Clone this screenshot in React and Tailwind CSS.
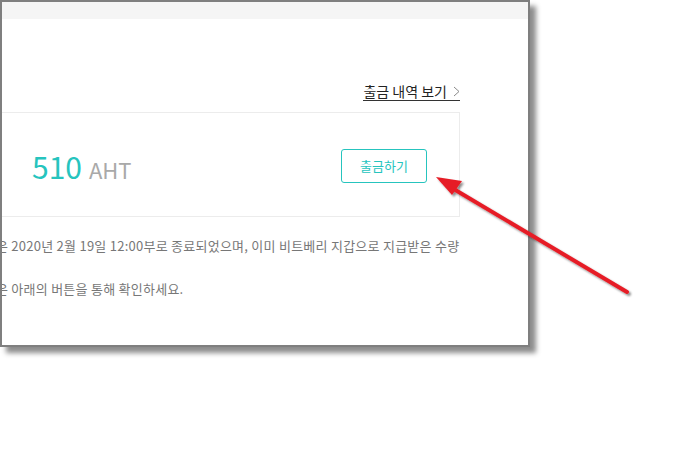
const font = { fontFamily: '"Noto Sans CJK KR", "Noto Sans", sans-serif' };

const Arrow = () => (
  <svg className="absolute left-0 top-0 pointer-events-none" width="680" height="453" viewBox="0 0 680 453">
    <defs>
      <filter id="sh" x="-20%" y="-20%" width="140%" height="140%">
        <feDropShadow dx="2" dy="2" stdDeviation="1.2" floodColor="#000" floodOpacity="0.45" />
      </filter>
    </defs>
    <g filter="url(#sh)">
      <line x1="627" y1="292" x2="452" y2="188" stroke="#e61e27" strokeWidth="4" strokeLinecap="round" />
      <polygon points="436,177 462,181 452,195" fill="#e61e27" />
    </g>
  </svg>
);

export default function App() {
  return (
    <div className="relative w-[680px] h-[453px] bg-white overflow-hidden" style={font}>
      <div className="w-[530px] h-[347px] border-2 border-[#7f7f7f] bg-white flex flex-col shadow-[6px_6px_5px_rgba(0,0,0,0.45)]">
        <div className="h-[17px] bg-[#f5f5f5] shrink-0" />
        <div className="flex-1 overflow-hidden pr-[68px]">
          <div className="pt-[64px] flex justify-end">
            <a className="flex items-center gap-[6px] text-[14px] leading-[16px] text-[#222] border-b border-[#333] pb-[1px]">
              <span>출금 내역 보기</span>
              <svg width="7" height="11" viewBox="0 0 7 11" fill="none">
                <path d="M1 1l5 4.5L1 10" stroke="#8a8a8a" strokeWidth="1" />
              </svg>
            </a>
          </div>
          <div className="mt-[11px] -ml-[20px] h-[105px] border border-[#ececec] flex items-center justify-between pl-[49px] pr-[32px]">
            <div className="flex items-baseline mt-[3px]">
              <span className="text-[30px] leading-none text-[#26c4be]">510</span>
              <span className="ml-[7px] text-[22px] leading-none text-[#a9a9a9]">AHT</span>
            </div>
            <button className="w-[86px] h-[34px] mt-[3px] border border-[#26c4be] rounded-[3px] text-[13px] text-[#26c4be] bg-white">
              출금하기
            </button>
          </div>
          <div className="-ml-[6px] mt-[19px] text-[13px] tracking-[0.25px] text-[#777] whitespace-nowrap">
            <p className="leading-[20px]">은 2020년 2월 19일 12:00부로 종료되었으며, 이미 비트베리 지갑으로 지급받은 수량</p>
            <p className="leading-[20px] mt-[23px]">은 아래의 버튼을 통해 확인하세요.</p>
          </div>
        </div>
      </div>
      <Arrow />
    </div>
  );
}
